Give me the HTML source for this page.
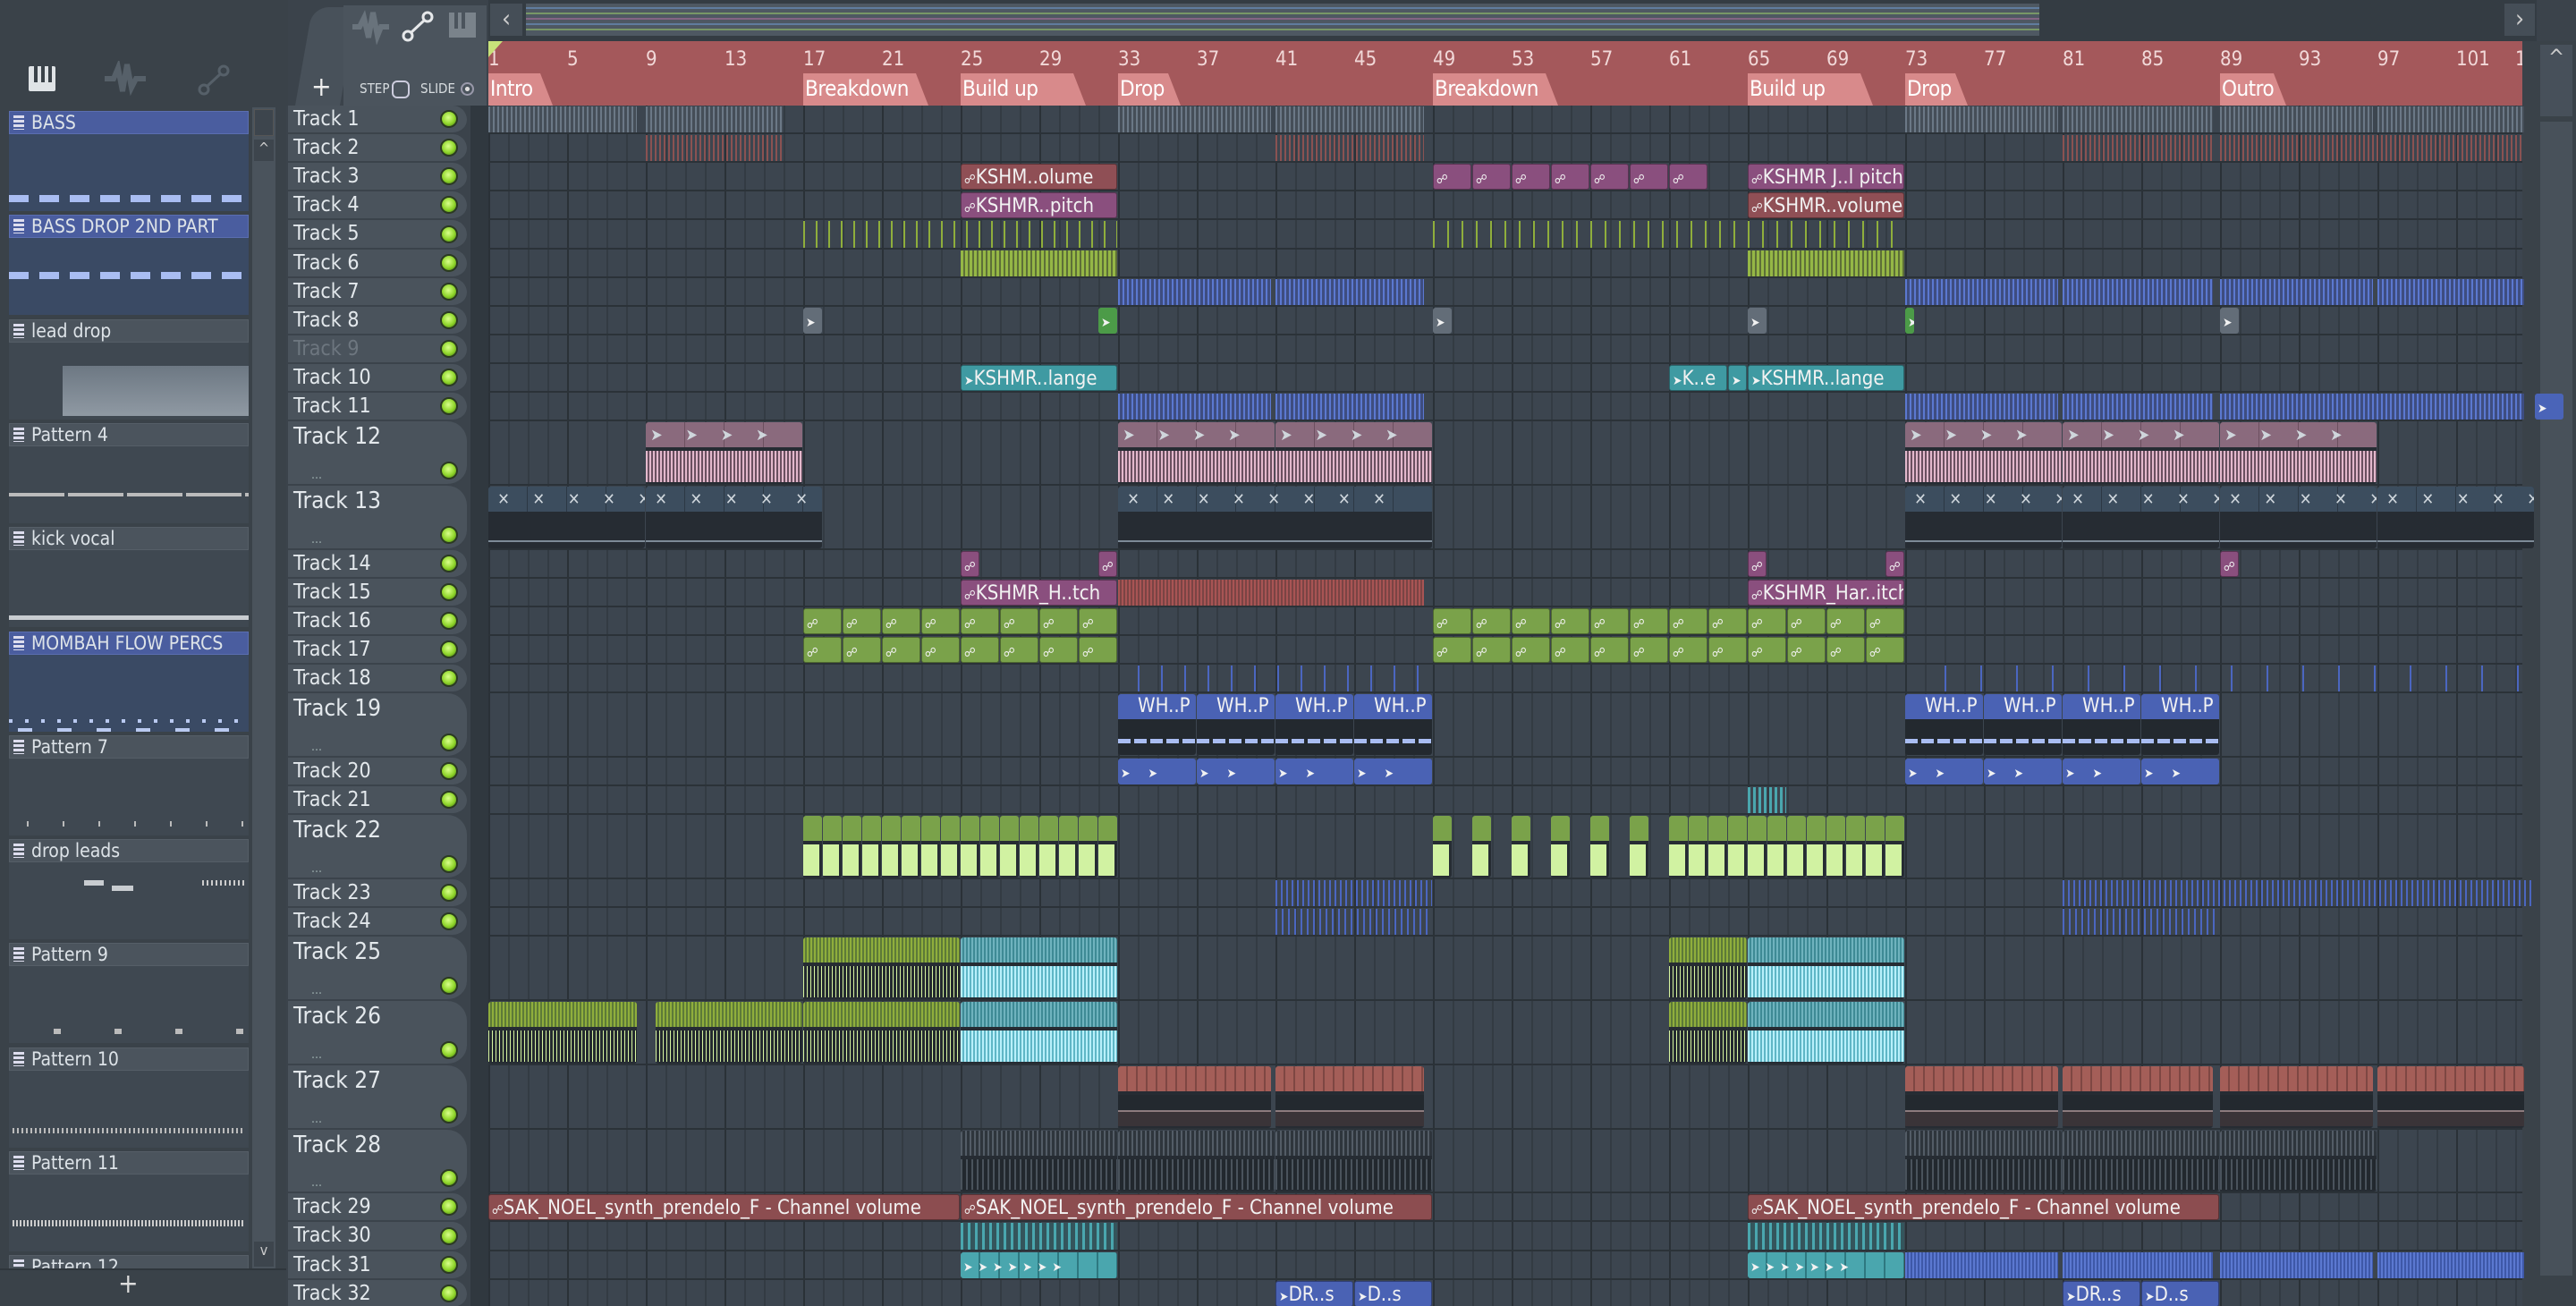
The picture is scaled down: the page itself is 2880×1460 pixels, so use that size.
<!DOCTYPE html>
<html style="width:2880px;height:1460px;overflow:hidden"><head><meta charset="utf-8">
<style>
*{margin:0;padding:0;box-sizing:border-box}
html,body{width:2880px;height:1460px;overflow:hidden}
body{background:#3b434b;font-family:"DejaVu Sans Condensed","Liberation Sans Narrow","Liberation Sans",sans-serif;color:#dfe6ea;position:relative}
.a{position:absolute}
.pat{position:absolute;left:10px;width:268px}
.ph{height:26px;background:#4b545d;border:1px solid #555e67;font-size:21px;line-height:24px;padding-left:24px;color:#dde3e8;position:relative}
.ph.sel{background:#4a5d9f;border-color:#5b6eb0}
.ph:before{content:"";position:absolute;left:4px;top:4px;width:12px;height:16px;background:repeating-linear-gradient(#dde 0 3px,transparent 3px 5px)}
.pb{height:86px;background:#3f4851;position:relative}
.pb.sel{background:#3a4a64}
.trk{position:absolute;left:322px;width:200px;background:#4a535c;border-radius:0 22px 22px 0;border-bottom:2px solid #3b434b;font-size:23px;color:#e3e8ec}
.trk span{position:absolute;left:6px;top:2px}
.led{position:absolute;left:170px;width:20px;height:20px;border-radius:50%;background:radial-gradient(circle at 45% 40%,#d8ff8a,#8fd52a 55%,#3b6a10);border:2px solid #2b3a22}
.dots{position:absolute;left:26px;bottom:2px;font-size:14px;color:#9aa}
.c{position:absolute;border-radius:3px;overflow:hidden;font-size:22px;color:#f2f2f2;white-space:nowrap;line-height:30px;padding-left:3px}
</style></head><body>
<div class="a" style="left:0;top:0;width:322px;height:118px;background:#3a4249"></div>
<div class="a" style="left:32px;top:74px;width:30px;height:28px;background:#dfe3e6;border-radius:2px"></div>
<div class="a" style="left:38px;top:74px;width:4px;height:18px;background:#3a4249"></div>
<div class="a" style="left:46px;top:74px;width:4px;height:18px;background:#3a4249"></div>
<div class="a" style="left:54px;top:74px;width:4px;height:18px;background:#3a4249"></div>
<svg class="a" style="left:115px;top:68px" width="50" height="40"><path d="M2 20 L12 20 L17 8 L22 34 L27 4 L32 30 L37 20 L48 20" stroke="#566069" stroke-width="6" fill="none"/></svg>
<svg class="a" style="left:220px;top:70px" width="40" height="40"><circle cx="8" cy="30" r="5" stroke="#566069" stroke-width="3" fill="none"/><circle cx="30" cy="9" r="5" stroke="#566069" stroke-width="3" fill="none"/><path d="M12 26 L26 13" stroke="#566069" stroke-width="3"/></svg>
<div class="a" style="left:330px;top:8px;width:50px;height:110px;background:#48515a;border-radius:18px 0 0 0;transform:skewX(-10deg);transform-origin:bottom"></div>
<div class="a" style="left:348px;top:80px;font-size:30px;color:#eee">+</div>
<div class="a" style="left:384px;top:6px;width:160px;height:112px;background:#4b545d"></div>
<svg class="a" style="left:392px;top:10px" width="45" height="40"><path d="M2 20 L10 20 L15 10 L20 32 L25 4 L30 30 L34 20 L43 20" stroke="#69737c" stroke-width="6" fill="none"/></svg>
<svg class="a" style="left:448px;top:10px" width="40" height="40"><circle cx="8" cy="30" r="5" stroke="#e6e8ea" stroke-width="3" fill="none"/><circle cx="30" cy="9" r="5" stroke="#e6e8ea" stroke-width="3" fill="none"/><path d="M12 26 L26 13" stroke="#e6e8ea" stroke-width="3"/></svg>
<div class="a" style="left:502px;top:14px;width:30px;height:28px;background:#7a838b"></div>
<div class="a" style="left:508px;top:14px;width:4px;height:18px;background:#4b545d"></div>
<div class="a" style="left:516px;top:14px;width:4px;height:18px;background:#4b545d"></div>
<div class="a" style="left:402px;top:90px;font-size:15px;color:#d8dde0">STEP</div>
<div class="a" style="left:438px;top:90px;width:20px;height:20px;border:2px solid #ccd;border-radius:6px"></div>
<div class="a" style="left:470px;top:90px;font-size:15px;color:#d8dde0">SLIDE</div>
<div class="a" style="left:515px;top:92px;width:15px;height:15px;border:2px solid #99a;border-radius:50%;background:radial-gradient(#ddd 30%,transparent 35%)"></div>
<div class="a" style="left:546px;top:0;width:2290px;height:46px;background:#343c43"></div>
<div class="a" style="left:548px;top:4px;width:36px;height:36px;background:#454e57;font-size:28px;text-align:center;line-height:34px;color:#ccc">‹</div>
<div class="a" style="left:588px;top:4px;width:1692px;height:36px;background:#4e5862"></div>
<div class="a" style="left:588px;top:8px;width:1692px;height:30px;background:repeating-linear-gradient(#6f9ad0 0 2px,transparent 2px 6px,#9acb6a 6px 8px,transparent 8px 12px,#b070a0 12px 14px,transparent 14px 18px);opacity:.55"></div>
<div class="a" style="left:2800px;top:4px;width:34px;height:36px;background:#454e57;font-size:28px;text-align:center;line-height:34px;color:#ccc">›</div>
<div class="a" style="left:546px;top:46px;width:2274px;height:72px;background:#a4585b"></div>
<div id="ruler"></div>
<div class="a" style="left:546px;top:46px;width:0;height:0;border-left:16px solid #c8e27a;border-bottom:18px solid transparent"></div>
<div class="a" style="left:2820px;top:46px;width:60px;height:1414px;background:#3a4249"></div>
<div class="a" style="left:2840px;top:50px;width:36px;height:80px;background:#47505a;font-size:24px;color:#ccc;text-align:center">^</div>
<div class="a" style="left:2840px;top:136px;width:36px;height:1290px;background:#48515a"></div>
<div class="a" style="left:0;top:118px;width:320px;height:1342px;background:#3a4249"></div>
<div class="a" style="left:282px;top:120px;width:26px;height:1300px;background:#4a535c"></div>
<div class="a" style="left:284px;top:122px;width:22px;height:30px;background:#3d454d;border:1px solid #555"></div>
<div class="a" style="left:284px;top:156px;width:22px;height:24px;background:#3d454d;color:#ccc;font-size:16px;text-align:center">^</div>
<div class="a" style="left:284px;top:1388px;width:22px;height:28px;background:#3d454d;color:#ccc;font-size:16px;text-align:center">v</div>
<div id="pats"></div>
<div class="a" style="left:0;top:1418px;width:320px;height:42px;background:#3a4249;border-top:2px solid #2f363c"></div>
<div class="a" style="left:132px;top:1418px;font-size:30px;color:#ddd">+</div>
<div class="a" style="left:526px;top:118px;width:20px;height:1342px;background:#30383f"></div>
<div id="grid" class="a" style="left:546px;top:118px;width:2274px;height:1342px;background:#3c454f;overflow:hidden"></div>
<div id="tracks"></div>
<div id="clips"></div>
<script>
var B=function(n){return 546+(n-1)*22};
var tall={12:1,13:1,19:1,22:1,25:1,26:1,27:1,28:1};
var R={},y=118;
for(var i=1;i<=32;i++){var h=tall[i]?71.8:32.1;R[i]=[Math.round(y),Math.round(y+h)-Math.round(y)];y+=h;}
var gl='';
for(var b=1;b<=104;b++){gl+='<div class="a" style="left:'+(B(b)-546)+'px;top:0;width:2px;height:1342px;background:'+(b%4==1?'#2a3137':'#333b43')+'"></div>';}
for(var i=1;i<=32;i++){gl+='<div class="a" style="left:0;top:'+(R[i][0]+R[i][1]-118-2)+'px;width:2274px;height:2px;background:#2b3238"></div>';}
document.getElementById('grid').innerHTML=gl;
var t='';
for(var i=1;i<=32;i++){var r=R[i];t+='<div class="trk" style="top:'+r[0]+'px;height:'+r[1]+'px"><span style="'+(i==9?'color:#6d767f':'')+(tall[i]?';font-size:26px':'')+'">Track '+i+'</span><div class="led" style="top:'+(r[1]-27)+'px"></div>'+(tall[i]?'<div class="dots">...</div>':'')+'</div>';}
document.getElementById('tracks').innerHTML=t;
var ru='';
var nums=[1,5,9,13,17,21,25,29,33,37,41,45,49,53,57,61,65,69,73,77,81,85,89,93,97,101];
nums.forEach(function(n){ru+='<div class="a" style="left:'+B(n)+'px;top:54px;font-size:22px;color:#f1d8d8">'+n+'</div>';});
ru+='<div class="a" style="left:2812px;top:54px;font-size:22px;color:#f1d8d8">10</div>';
[[1,'Intro',72],[17,'Breakdown',140],[25,'Build up',140],[33,'Drop',70],[49,'Breakdown',140],[65,'Build up',140],[73,'Drop',70],[89,'Outro',74]].forEach(function(m){
ru+='<div class="a" style="left:'+B(m[0])+'px;top:82px;height:36px;width:'+m[2]+'px;background:#d88a8b;clip-path:polygon(0 0,calc(100% - 14px) 0,100% 100%,0 100%);font-size:24px;letter-spacing:-0.5px;color:#fff;padding-left:2px;line-height:34px;white-space:nowrap">'+m[1]+'</div>';});
document.getElementById('ruler').innerHTML=ru;
var P=[['BASS',1],['BASS DROP 2ND PART',1],['lead drop',0],['Pattern 4',0],['kick vocal',0],['MOMBAH FLOW PERCS',1],['Pattern 7',0],['drop leads',0],['Pattern 9',0],['Pattern 10',0],['Pattern 11',0],['Pattern 12',0]];
var p='';
P.forEach(function(q,k){var top=124+k*116.3;p+='<div class="pat" style="top:'+top+'px"><div class="ph'+(q[1]?' sel':'')+'">'+q[0]+'</div><div class="pb'+(q[1]?' sel':'')+'">'+
(k<2?'<div class="a" style="left:0;right:0;bottom:'+(k==0?10:40)+'px;height:8px;background:repeating-linear-gradient(90deg,#a9bdf2 0 22px,transparent 22px 34px)"></div>':'')+
(k==2?'<div class="a" style="left:60px;right:0;bottom:4px;height:56px;background:linear-gradient(#6d7883,#8f99a3)"></div>':'')+
(k==3?'<div class="a" style="left:0;right:0;bottom:30px;height:4px;background:repeating-linear-gradient(90deg,#bbb 0 62px,transparent 62px 66px)"></div>':'')+
(k==4?'<div class="a" style="left:0;right:0;bottom:8px;height:5px;background:#c8ccd0"></div>':'')+
(k==5?'<div class="a" style="left:0;right:0;bottom:10px;height:4px;background:repeating-linear-gradient(90deg,#b9c9f0 0 4px,transparent 4px 18px)"></div><div class="a" style="left:10px;right:0;bottom:0;height:4px;background:repeating-linear-gradient(90deg,#b9c9f0 0 16px,transparent 16px 44px)"></div>':'')+
(k==6?'<div class="a" style="left:20px;right:0;bottom:10px;height:6px;background:repeating-linear-gradient(90deg,#bbb 0 2px,transparent 2px 40px)"></div>':'')+
(k==7?'<div class="a" style="left:84px;top:20px;width:22px;height:6px;background:#c8ccd0"></div><div class="a" style="left:115px;top:26px;width:24px;height:6px;background:#c8ccd0"></div><div class="a" style="left:216px;top:20px;width:50px;height:6px;background:repeating-linear-gradient(90deg,#ccc 0 2px,transparent 2px 5px)"></div>':'')+
(k==8?'<div class="a" style="left:50px;right:0;top:70px;height:6px;background:repeating-linear-gradient(90deg,#bbb 0 8px,transparent 8px 68px)"></div>':'')+
(k==9?'<div class="a" style="left:4px;right:4px;bottom:16px;height:6px;background:repeating-linear-gradient(90deg,#bbb 0 2px,transparent 2px 5px)"></div>':'')+
(k==10?'<div class="a" style="left:4px;right:4px;bottom:28px;height:7px;background:repeating-linear-gradient(90deg,#ccc 0 2px,transparent 2px 4px)"></div>':'')+
'</div></div>';});
document.getElementById('pats').innerHTML=p;
var C='';
function box(tr,s,e,bg,html,extra){var r=R[tr];C+='<div class="c" style="left:'+B(s)+'px;top:'+(r[0]+1)+'px;width:'+((e-s)*22-1)+'px;height:'+(r[1]-3)+'px;background:'+bg+';'+(extra||'')+'">'+(html||'')+'</div>';}
function lines(tr,s,e,col,bg,w,gap){box(tr,s,e,'repeating-linear-gradient(90deg,'+col+' 0 '+(w||2)+'px,transparent '+(w||2)+'px '+(gap||6)+'px),'+(bg||'rgba(0,0,0,0)'),'','border-radius:0');}
function lab(tr,s,e,bg,txt,ic){box(tr,s,e,bg,'<span style="font-size:14px">'+(ic||'&#9741;')+'</span>'+txt,'border:1px solid rgba(0,0,0,.35)');}
function tallc(tr,s,e,head,body,wave,htxt){var r=R[tr];C+='<div class="c" style="left:'+B(s)+'px;top:'+(r[0]+1)+'px;width:'+((e-s)*22-1)+'px;height:'+(r[1]-3)+'px;background:#262c33;padding:0"><div style="height:28px;background:'+head+';font-size:18px;color:#cfd6dc;letter-spacing:0">'+(htxt||'')+'</div><div style="position:absolute;left:0;right:0;top:32px;bottom:2px;background:'+wave+'"></div></div>';}
var AR='&#10148;';
[[1,8.6],[9,16],[33,40.8],[41,48.6],[73,80.8],[81,88.7],[89,96.8],[97,104.5]].forEach(function(a){lines(1,a[0],a[1],'#6b7886','#454e58',2,5)});
[[9,16],[41,48.6],[81,88.7],[89,104.5]].forEach(function(a){lines(2,a[0],a[1],'#8a5252','rgba(0,0,0,0)',2,5)});
lab(3,25,33,'#8f4f55','KSHM..olume');lab(4,25,33,'#8a4f7e','KSHMR..pitch');
for(var k=49;k<63;k+=2)lab(3,k,k+2,'#8a4f7e','');
lab(3,65,73,'#8a4f7e','KSHMR J..l pitch');lab(4,65,73,'#8f4f55','KSHMR..volume');
lines(5,17,33,'#8fae3c','rgba(0,0,0,0)',2,14);lines(5,49,73,'#8fae3c','rgba(0,0,0,0)',2,16);
lines(6,25,33,'#95b746','#5d6f38',3,5);lines(6,65,73,'#95b746','#5d6f38',3,5);
[[33,40.8],[41,48.6],[73,80.8],[81,88.7],[89,96.8],[97,104.5]].forEach(function(a){lines(7,a[0],a[1],'#5b78d0','#3e4d80',2,5)});
[[17,18,'#636d78'],[32,33,'#4c9b48'],[49,50,'#636d78'],[65,66,'#636d78'],[73,73.5,'#4c9b48'],[89,90,'#636d78']].forEach(function(a){box(8,a[0],a[1],a[2],'<span style="font-size:14px">'+AR+'</span>')});
lab(10,25,33,'#3f9aa2','KSHMR..lange',AR);lab(10,61,64,'#3f9aa2','K..e',AR);lab(10,64,65,'#3f9aa2','',AR);lab(10,65,73,'#3f9aa2','KSHMR..lange',AR);
[[33,40.8],[41,48.6],[73,80.8],[81,88.7],[89,104.5]].forEach(function(a){lines(11,a[0],a[1],'#5b78d0','#3e4d80',2,5)});
box(11,105,106.5,'#4a64b8','<span style="font-size:14px">'+AR+'</span>');
[[9,17],[33,41],[41,49],[73,81],[81,89],[89,97]].forEach(function(a){tallc(12,a[0],a[1],'repeating-linear-gradient(90deg,#8a6a7d 0 43px,#6c5060 43px 44px)','','repeating-linear-gradient(90deg,#e3b8cc 0 2px,#6a5060 2px 4px)','&nbsp;'+AR+'&nbsp;&nbsp;&nbsp;&nbsp;&nbsp;'+AR+'&nbsp;&nbsp;&nbsp;&nbsp;&nbsp;'+AR+'&nbsp;&nbsp;&nbsp;&nbsp;&nbsp;'+AR)});
[[1,9],[9,18],[33,49],[73,81],[81,89],[89,97],[97,105]].forEach(function(a){tallc(13,a[0],a[1],'repeating-linear-gradient(90deg,#3c4d5e 0 43px,#2c3844 43px 44px)','','linear-gradient(transparent 80%,#7d8a97 80% 86%,transparent 86%)','&nbsp;&nbsp;&#10005;&nbsp;&nbsp;&nbsp;&nbsp;&nbsp;&#10005;&nbsp;&nbsp;&nbsp;&nbsp;&nbsp;&#10005;&nbsp;&nbsp;&nbsp;&nbsp;&nbsp;&#10005;&nbsp;&nbsp;&nbsp;&nbsp;&nbsp;&#10005;&nbsp;&nbsp;&nbsp;&nbsp;&nbsp;&#10005;&nbsp;&nbsp;&nbsp;&nbsp;&nbsp;&#10005;&nbsp;&nbsp;&nbsp;&nbsp;&nbsp;&#10005;')});
[25,32,65,72,89].forEach(function(k){lab(14,k,k+1,'#8a4f7e','')});
lab(15,25,33,'#8a4f7e','KSHMR_H..tch');lines(15,33,48.6,'#a85454','#7a4444',2,4);lab(15,65,73,'#8a4f7e','KSHMR_Har..itch');
for(var k=17;k<33;k+=2){lab(16,k,k+2,'#7aa24a','');lab(17,k,k+2,'#7aa24a','');}
for(var k=49;k<73;k+=2){lab(16,k,k+2,'#7aa24a','');lab(17,k,k+2,'#7aa24a','');}
lines(18,34,49,'#4b66c0','rgba(0,0,0,0)',2,26);lines(18,75,105,'#4b66c0','rgba(0,0,0,0)',2,40);
[[33,37],[37,41],[41,45],[45,49],[73,77],[77,81],[81,85],[85,89]].forEach(function(a){var r=R[19];C+='<div class="c" style="left:'+B(a[0])+'px;top:'+(r[0]+1)+'px;width:'+(87)+'px;height:68px;background:#23292f;padding:0"><div style="height:28px;background:#4a62b4;padding-left:22px;line-height:28px">WH..P</div><div style="position:absolute;left:0;right:0;top:50px;height:5px;background:repeating-linear-gradient(90deg,#a9bdf2 0 14px,transparent 14px 18px)"></div></div>';});
[[33,37],[37,41],[41,45],[45,49],[73,77],[77,81],[81,85],[85,89]].forEach(function(a){box(20,a[0],a[1],'#4a62b4','<span style="font-size:14px">'+AR+' &nbsp; &nbsp; '+AR+'</span>')});
lines(21,65,67,'#4aa6ae','rgba(0,0,0,0)',3,6);
var g22=function(s,e){tallc(22,s,e,'#7aa24a','','repeating-linear-gradient(90deg,#d1f2a2 0 18px,transparent 18px 22px)');};
for(var k=17;k<33;k++)g22(k,k+1);[49,51,53,55,57,59].forEach(function(k){g22(k,k+1)});for(var k=61;k<73;k++)g22(k,k+1);
lines(23,41,49,'#4b66c0','rgba(0,0,0,0)',2,6);lines(23,81,105,'#4b66c0','rgba(0,0,0,0)',2,6);
lines(24,41,49,'#4b66c0','rgba(0,0,0,0)',2,7);lines(24,81,89,'#4b66c0','rgba(0,0,0,0)',2,7);
function gw(tr,s,e,h,w){tallc(tr,s,e,'repeating-linear-gradient(90deg,'+h+' 0 2px,#5d7a38 2px 4px)','','repeating-linear-gradient(90deg,'+w+' 0 1px,#23292f 1px 4px)');}
function tw(tr,s,e){tallc(tr,s,e,'repeating-linear-gradient(90deg,#6fb3be 0 2px,#3e8a95 2px 4px)','','repeating-linear-gradient(90deg,#b8f0fb 0 2px,#5fb6c6 2px 4px)');}
gw(25,17,25,'#8fae3c','#d7f5a0');tw(25,25,33);gw(25,61,65,'#8fae3c','#d7f5a0');tw(25,65,73);
gw(26,1,8.6,'#8fae3c','#d7f5a0');gw(26,9.5,17,'#8fae3c','#d7f5a0');gw(26,17,25,'#8fae3c','#d7f5a0');tw(26,25,33);gw(26,61,65,'#8fae3c','#d7f5a0');tw(26,65,73);
[[33,40.8],[41,48.6],[73,80.8],[81,88.7],[89,96.8],[97,104.5]].forEach(function(a){tallc(27,a[0],a[1],'repeating-linear-gradient(90deg,#a45e58 0 9px,#7e4743 9px 11px)','','linear-gradient(#23292f 0 50%,#e8c8c8 50% 53%,#3a3438 53%)')});
[[25,33],[33,41],[41,49],[73,81],[81,89],[89,97]].forEach(function(a){tallc(28,a[0],a[1],'repeating-linear-gradient(90deg,#535c66 0 2px,#2e353c 2px 5px)','','repeating-linear-gradient(90deg,#4a535c 0 2px,#22282e 2px 6px)')});
[[1,25],[25,49],[65,89]].forEach(function(a){lab(29,a[0],a[1],'#8c4d50','SAK_NOEL_synth_prendelo_F - Channel volume')});
lines(30,25,33,'#4aa6ae','#34555c',3,8);lines(30,65,73,'#4aa6ae','#34555c',3,8);
[[25,33],[65,73]].forEach(function(a){box(31,a[0],a[1],'repeating-linear-gradient(90deg,#4aa6ae 0 20px,#2e7880 20px 22px)','<span style="font-size:14px;letter-spacing:6px">'+AR+AR+AR+AR+AR+AR+AR+'</span>')});
[[73,80.8],[81,88.7],[89,96.8],[97,104.5]].forEach(function(a){lines(31,a[0],a[1],'#5b78d0','#3e58a8',2,4)});
[[41,45,'DR..s'],[45,49,'D..s'],[81,85,'DR..s'],[85,89,'D..s']].forEach(function(a){lab(32,a[0],a[1],'#4a62b4',a[2],AR)});
document.getElementById('clips').innerHTML=C;
</script>
</body></html>
